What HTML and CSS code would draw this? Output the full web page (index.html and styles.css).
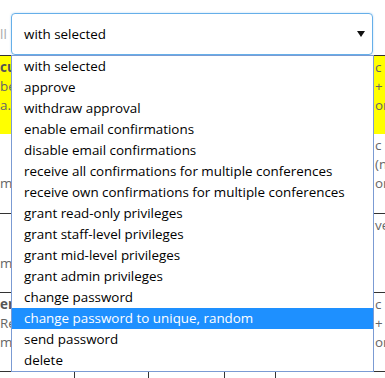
FILE: index.html
```
<!DOCTYPE html>
<html lang="en">
<head>
  <meta charset="UTF-8">
  <title>Users - bulk actions</title>
  <link rel="stylesheet" href="styles.css">
</head>
<body>

  <div class="page">
    <!-- Bulk action bar -->
    <div class="bulk-bar">
      <span class="bulk-label">ll</span>
      <div class="select-box">
        <span class="select-value">with selected</span>
        <span class="select-arrow"></span>
      </div>
    </div>

    <!-- User table (mostly hidden behind the open menu) -->
    <div class="user-table">
      <div class="row row-flagged">
        <div class="cell-left"><b>cu</b><br>be<br>a.c</div>
        <div class="cell-gap"></div>
        <div class="cell-right">c<br>+<br>or</div>
      </div>
      <div class="row row-plain">
        <div class="cell-left"><br><br>m</div>
        <div class="cell-gap"></div>
        <div class="cell-right">c<br>(n<br>or</div>
      </div>
      <div class="row">
        <div class="cell-left"><br><br>m</div>
        <div class="cell-gap"></div>
        <div class="cell-right">ve</div>
      </div>
      <div class="row">
        <div class="cell-left"><b>er</b><br>Re<br>m</div>
        <div class="cell-gap"></div>
        <div class="cell-right">c<br>+<br>or</div>
      </div>
      <div class="row row-last">
        <div class="col c1"></div>
        <div class="col c2"></div>
        <div class="col c3"></div>
        <div class="col c4"></div>
        <div class="col c5"></div>
      </div>
    </div>

    <!-- Open select menu -->
    <ul class="select-menu">
      <li>with selected</li>
      <li>approve</li>
      <li>withdraw approval</li>
      <li>enable email confirmations</li>
      <li>disable email confirmations</li>
      <li>receive all confirmations for multiple conferences</li>
      <li>receive own confirmations for multiple conferences</li>
      <li>grant read-only privileges</li>
      <li>grant staff-level privileges</li>
      <li>grant mid-level privileges</li>
      <li>grant admin privileges</li>
      <li>change password</li>
      <li class="active">change password to unique, random</li>
      <li>send password</li>
      <li>delete</li>
    </ul>
  </div>

</body>
</html>
```

FILE: styles.css
```
/* Basic */
* {
  margin: 0;
  padding: 0;
  box-sizing: border-box;
}

html, body {
  overflow: hidden;
}

body {
  background: #fff;
  font-family: 'Open Sans', sans-serif;
  font-size: 13.4px;
  color: #111;
}

.page {
  position: relative;
  width: 385px;
  height: 378px;
  overflow: hidden;
}

/* Bulk action bar */
.bulk-bar {
  display: flex;
  align-items: center;
  height: 55px;
  padding-top: 13px;
}

.bulk-label {
  width: 11px;
  color: #aaa;
}

.select-box {
  width: 362px;
  height: 42px;
  border: 1px solid #66afe9;
  border-radius: 4px;
  display: flex;
  align-items: center;
  justify-content: space-between;
  padding: 0 7px 0 12px;
  box-shadow: 0 0 2px rgba(102, 175, 233, 0.5);
}

.select-value {
  color: #000;
}

.select-arrow {
  width: 0;
  height: 0;
  border-left: 4px solid transparent;
  border-right: 4px solid transparent;
  border-top: 6px solid #111;
}

/* Table */
.user-table {
  color: #666;
  line-height: 19px;
}

.row {
  display: flex;
  height: 79px;
  border-top: 1px solid #333;
}

.row-flagged {
  background: #ffff00;
}

.row-plain {
  border-top: none;
}

.cell-left {
  width: 12px;
  padding-top: 2px;
  white-space: nowrap;
  overflow: hidden;
}

.cell-left b {
  color: #555;
}

.cell-gap {
  flex: 1;
}

.cell-right {
  width: 12px;
  padding-top: 2px;
  padding-left: 2px;
  white-space: nowrap;
  overflow: hidden;
}

.row-last .col {
  height: 100%;
  border-left: 1px solid #333;
}

.row-last .c1 { width: 74px; border-left: none; }
.row-last .c2 { width: 74px; }
.row-last .c3 { width: 76px; }
.row-last .c4 { width: 51px; }
.row-last .c5 { flex: 1; }

/* Open dropdown menu, drawn over the table */
.select-menu {
  position: absolute;
  top: 55px;
  left: 11px;
  width: 363px;
  list-style: none;
  background: #fff;
  border: 1px solid #7b9bd3;
  color: #000;
}

.select-menu li {
  height: 21px;
  line-height: 21px;
  padding-left: 12px;
  white-space: nowrap;
}

.select-menu li.active {
  background: #1e90ff;
  color: #fff;
}
```
